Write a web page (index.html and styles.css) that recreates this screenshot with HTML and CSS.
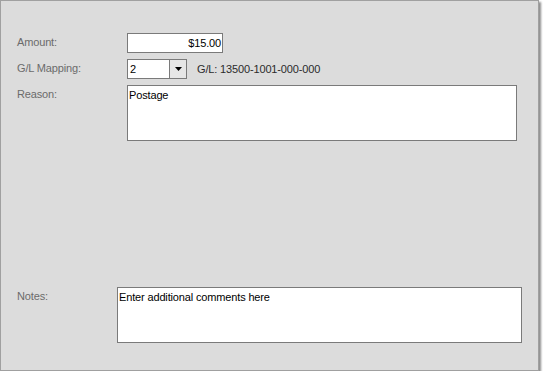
FILE: index.html
```html
<!DOCTYPE html>
<html lang="en">
<head>
    <meta charset="UTF-8">
    <meta name="viewport" content="width=device-width, initial-scale=1.0">
    <title>Expense Details</title>
    <link rel="stylesheet" href="styles.css">
</head>
<body>

    <div class="panel">
        <div class="fields">
            <label class="field-label" for="amount">Amount:</label>
            <div class="field">
                <div class="textbox amount" id="amount">$15.00</div>
            </div>

            <label class="field-label" for="mapping">G/L Mapping:</label>
            <div class="field field-row">
                <div class="combo" id="mapping">
                    <span class="combo-value">2</span>
                    <span class="combo-button">
                        <svg width="7" height="4" viewBox="0 0 7 4"><path d="M0 0h7L3.5 4z" fill="#000"/></svg>
                    </span>
                </div>
                <span class="gl-code">G/L: 13500-1001-000-000</span>
            </div>

            <label class="field-label" for="reason">Reason:</label>
            <div class="field">
                <div class="textbox memo reason" id="reason">Postage</div>
            </div>
        </div>

        <div class="notes">
            <label class="field-label" for="notes">Notes:</label>
            <div class="textbox memo notes-box" id="notes">Enter additional comments here</div>
        </div>
    </div>

</body>
</html>
```

FILE: styles.css
```css
body {
    margin: 0;
    background: #ffffff;
    font-family: "Liberation Sans", Arial, sans-serif;
    font-size: 11px;
    letter-spacing: -0.15px;
}

.panel {
    width: 537px;
    height: 369px;
    padding: 0;
    border: 1px solid #a0a0a0;
    background-color: #dcdcdc;
    box-shadow: 2px 2px 2px rgba(0, 0, 0, 0.45);
    display: flex;
    flex-direction: column;
}

.fields {
    display: grid;
    grid-template-columns: 110px auto;
    row-gap: 6px;
    padding: 32px 0 0 16px;
}

.field-label {
    color: #6b6b6b;
    line-height: 13px;
    padding-top: 3px;
}

.field-row {
    display: flex;
    align-items: center;
}

.textbox {
    box-sizing: border-box;
    border: 1px solid #7a7a7a;
    background-color: #ffffff;
    color: #000000;
    line-height: 13px;
}

.amount {
    width: 96px;
    height: 20px;
    padding: 3px 1px 0 0;
    text-align: right;
}

.combo {
    box-sizing: border-box;
    width: 60px;
    height: 20px;
    border: 1px solid #7a7a7a;
    background-color: #ffffff;
    display: flex;
}

.combo-value {
    flex: 1;
    padding: 3px 0 0 2px;
    line-height: 13px;
    color: #000000;
}

.combo-button {
    width: 16px;
    border-left: 1px solid #7a7a7a;
    background-color: #e6e6e6;
    display: flex;
    align-items: center;
    justify-content: center;
}

.gl-code {
    margin-left: 10px;
    color: #2b2b2b;
}

.memo {
    height: 56px;
    padding: 3px 1px 0 1px;
}

.reason {
    width: 390px;
}

.notes {
    display: grid;
    grid-template-columns: 100px auto;
    padding: 146px 0 0 16px;
}

.notes-box {
    width: 405px;
}
```
